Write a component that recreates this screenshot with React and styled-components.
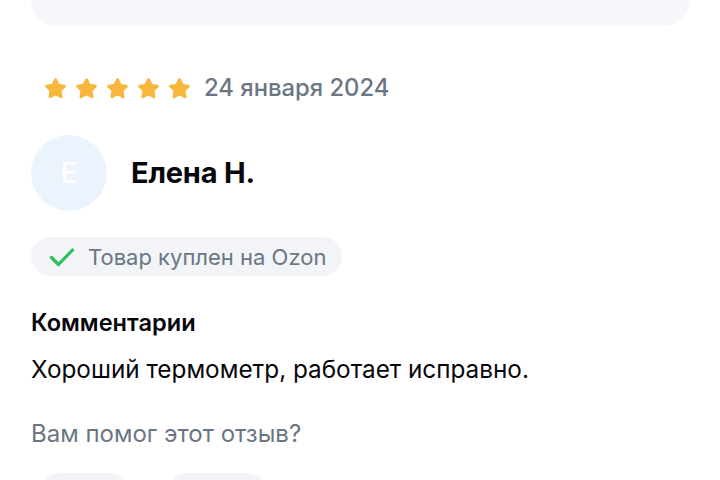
import styled, { createGlobalStyle } from "styled-components";

const GlobalStyle = createGlobalStyle`
  html, body {
    margin: 0;
    padding: 0;
    background: #ffffff;
  }
  body {
    font-family: Inter, "Noto Sans", "Liberation Sans", sans-serif;
    color: #07070b;
  }
`;

const Page = styled.div`
  width: 720px;
  height: 480px;
  overflow: hidden;
  padding: 0 30px 0 31px;
  box-sizing: border-box;
`;

const TopCard = styled.div`
  height: 26px;
  background: #f5f7fa;
  border-radius: 0 0 26px 26px;
`;

const Review = styled.div`
  display: flex;
  flex-direction: column;
  align-items: flex-start;
  padding-top: 48px;
`;

const RatingRow = styled.div`
  display: flex;
  align-items: center;
  gap: 13px;
  height: 28px;
  padding-left: 13px;
`;

const Stars = styled.div`
  display: flex;
  gap: 8px;
`;

const DateText = styled.span`
  font-size: 23.8px;
  line-height: 28px;
  font-weight: 500;
  color: #6b7684;
`;

const Author = styled.div`
  display: flex;
  align-items: center;
  gap: 24px;
  margin-top: 33px;
`;

const Avatar = styled.div`
  width: 76px;
  height: 76px;
  border-radius: 50%;
  background: #ebf4fd;
  color: #ffffff;
  display: flex;
  align-items: center;
  justify-content: center;
  font-size: 28px;
  font-weight: 500;
`;

const Name = styled.div`
  font-size: 29px;
  line-height: 34px;
  font-weight: 700;
  color: #07070b;
  letter-spacing: -0.2px;
`;

const Badge = styled.div`
  display: flex;
  align-items: center;
  gap: 13px;
  height: 39px;
  margin-top: 26px;
  padding: 0 16px 0 18px;
  border-radius: 20px;
  background: #f2f4f7;
  font-size: 22px;
  color: #6b7684;
`;

const Heading = styled.div`
  margin-top: 32px;
  font-size: 23.6px;
  line-height: 30px;
  font-weight: 600;
  color: #07070b;
`;

const Body = styled.div`
  margin-top: 16px;
  font-size: 24.3px;
  line-height: 30px;
  color: #07070b;
`;

const Question = styled.div`
  margin-top: 35px;
  font-size: 24px;
  line-height: 30px;
  color: #6b7684;
`;

const Buttons = styled.div`
  display: flex;
  gap: 37px;
  margin-top: 24px;
  padding-left: 9px;
`;

const Pill = styled.div`
  width: ${(p) => p.w}px;
  height: 40px;
  border-radius: 20px;
  background: #f2f4f7;
`;

const Star = () => (
  <svg width="23" height="22" viewBox="0 0 24 23">
    <path
      d="M12 1.2c.6 0 1.1.3 1.4.9l2.5 5.1 5.6.8c1.3.2 1.8 1.8.9 2.7l-4.1 4 1 5.6c.2 1.3-1.1 2.3-2.3 1.7L12 19.3 7 22c-1.2.6-2.5-.4-2.3-1.7l1-5.6-4.1-4c-.9-.9-.4-2.5.9-2.7l5.6-.8 2.5-5.1c.3-.6.8-.9 1.4-.9z"
      fill="#f6b73c"
    />
  </svg>
);

const Check = () => (
  <svg width="26" height="20" viewBox="0 0 26 20">
    <path
      d="M2.5 10.5l7 7L23.5 3"
      fill="none"
      stroke="#2fbf5a"
      strokeWidth="3.2"
      strokeLinecap="round"
      strokeLinejoin="round"
    />
  </svg>
);

const App = () => {
  return (
    <>
      <GlobalStyle />
      <Page>
        <TopCard />
        <Review>
          <RatingRow>
            <Stars>
              {[0, 1, 2, 3, 4].map((i) => (
                <Star key={i} />
              ))}
            </Stars>
            <DateText>24 января 2024</DateText>
          </RatingRow>
          <Author>
            <Avatar>Е</Avatar>
            <Name>Елена Н.</Name>
          </Author>
          <Badge>
            <Check />
            <span>Товар куплен на Ozon</span>
          </Badge>
          <Heading>Комментарии</Heading>
          <Body>Хороший термометр, работает исправно.</Body>
          <Question>Вам помог этот отзыв?</Question>
          <Buttons>
            <Pill w={90} />
            <Pill w={100} />
          </Buttons>
        </Review>
      </Page>
    </>
  );
};

export default App;
